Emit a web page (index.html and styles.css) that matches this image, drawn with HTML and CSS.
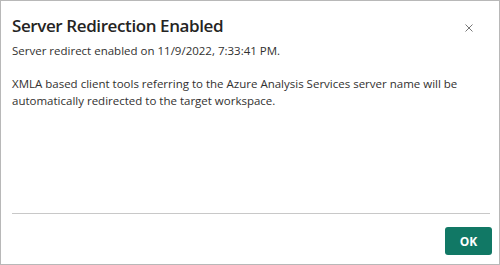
FILE: index.html
```html
<!DOCTYPE html>
<html>
<head>
<meta charset="utf-8">
<link rel="stylesheet" href="styles.css">
</head>
<body>
<div class="dialog">
  <div class="header">
    <div class="titles">
      <h1 class="title">Server Redirection Enabled</h1>
      <p class="subtitle">Server redirect enabled on 11/9/2022, 7:33:41 PM.</p>
    </div>
    <button class="close" aria-label="Close">
      <svg width="8" height="8" viewBox="0 0 8 8"><path d="M0.5 0.5 L7.5 7.5 M7.5 0.5 L0.5 7.5" stroke="#777" stroke-width="1" fill="none"/></svg>
    </button>
  </div>
  <p class="body">XMLA based client tools referring to the Azure Analysis Services server name will be automatically redirected to the target workspace.</p>
  <div class="spacer"></div>
  <div class="footer">
    <button class="ok">OK</button>
  </div>
</div>
</body>
</html>
```
FILE: styles.css
```css
html, body {
  margin: 0;
  padding: 0;
  background: #fff;
}
.dialog {
  box-sizing: border-box;
  width: 500px;
  height: 265px;
  border: 1px solid #b8b8b8;
  display: flex;
  flex-direction: column;
  font-family: "Open Sans", "Noto Sans", sans-serif;
  color: #323130;
  padding: 0 7px 0 11px;
}
.header {
  display: flex;
  align-items: flex-start;
  justify-content: space-between;
}
.title {
  margin: 14px 0 0 0;
  font-size: 17px;
  font-weight: 600;
  letter-spacing: -0.4px;
  line-height: 22px;
  color: #252423;
}
.subtitle {
  margin: 6px 0 0 0;
  font-size: 11.5px;
  line-height: 16px;
}
.close {
  margin: 23px 19px 0 0;
  padding: 0;
  border: 0;
  background: transparent;
  width: 8px;
  height: 8px;
  display: flex;
}
.body {
  margin: 16px 0 0 0;
  font-size: 11.5px;
  line-height: 17px;
}
.spacer {
  flex: 1;
}
.footer {
  display: flex;
  flex-direction: column;
  align-items: flex-end;
  padding: 0 0 9px 0;
}
.rule {
  display: none;
}
.footer::before {
  content: "";
  align-self: stretch;
  margin-right: 2px;
  border-top: 1px solid #c8c8c8;
  margin-bottom: 13px;
}
.ok {
  width: 47px;
  height: 28px;
  background: #117865;
  color: #fff;
  border: 0;
  border-radius: 3px;
  font-family: "Open Sans", "Noto Sans", sans-serif;
  font-weight: 700;
  font-size: 12px;
}
```
